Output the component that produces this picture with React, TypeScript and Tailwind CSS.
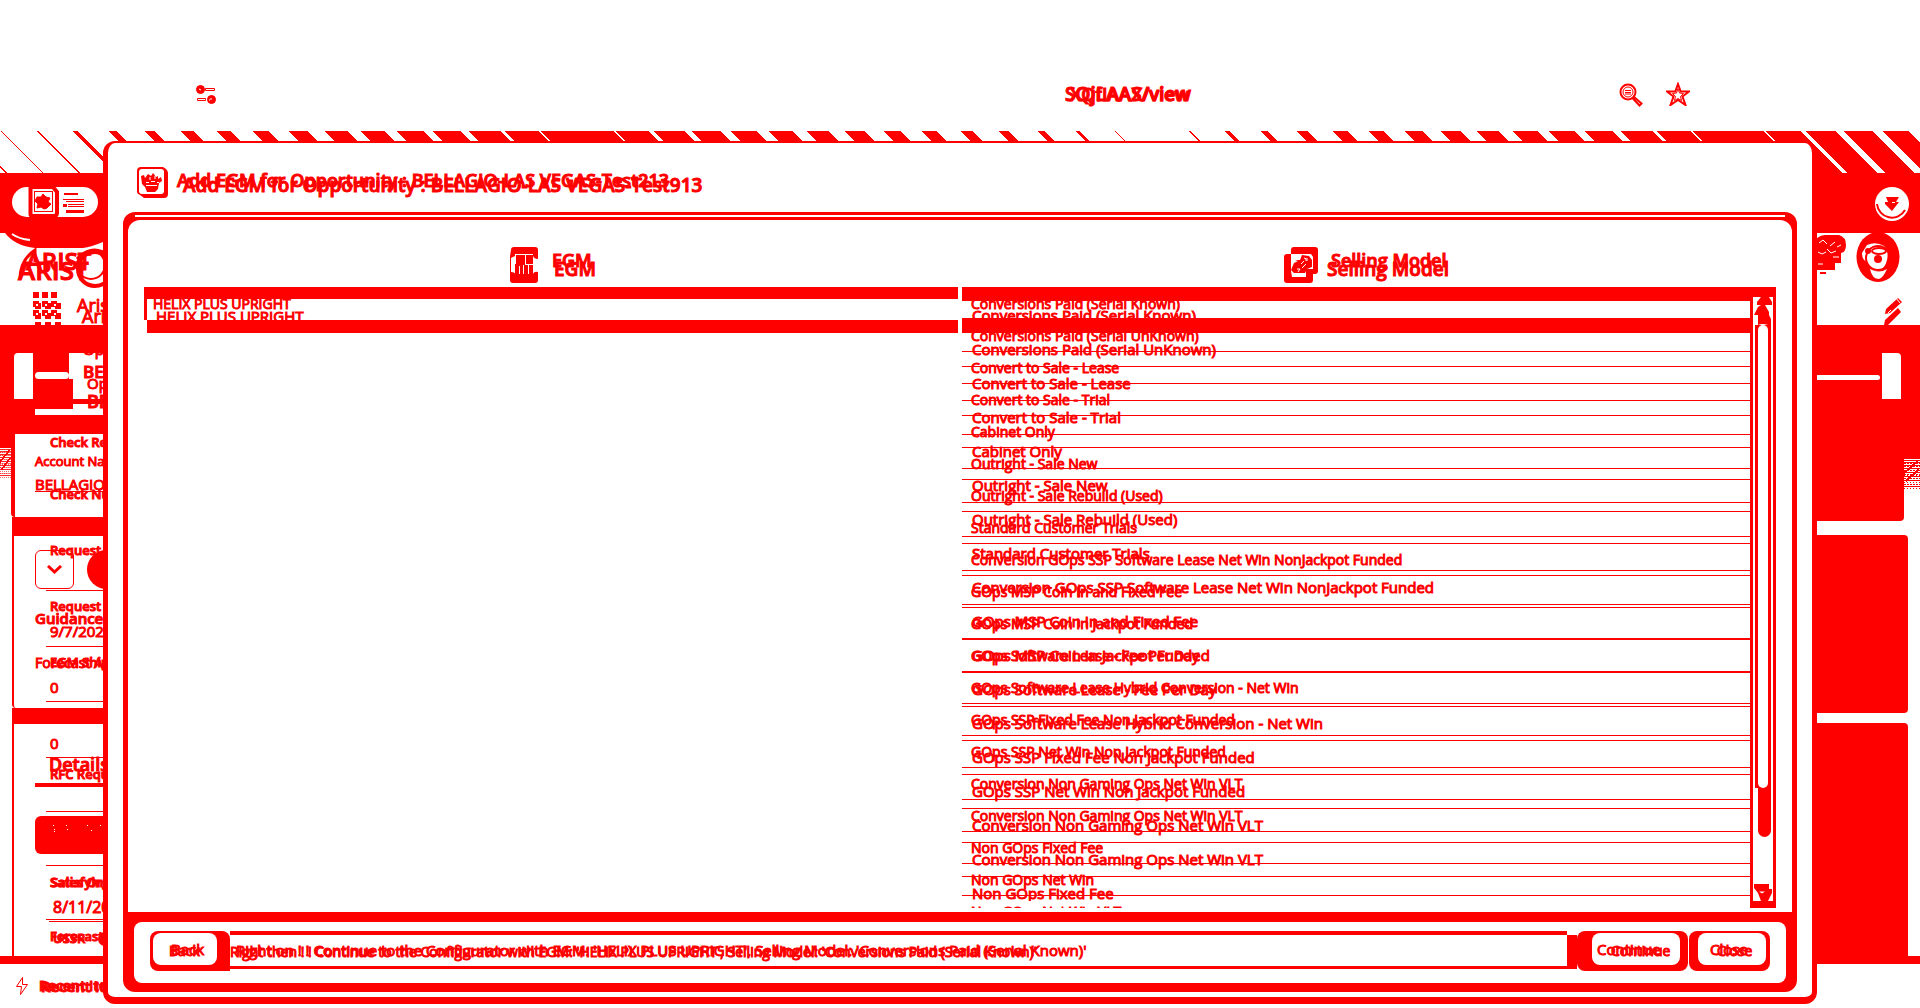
import React from "react";

const rows = [
  "Conversions Paid (Serial Known)",
  "Conversions Paid (Serial UnKnown)",
  "Convert to Sale - Lease",
  "Convert to Sale - Trial",
  "Cabinet Only",
  "Outright - Sale New",
  "Outright - Sale Rebuild (Used)",
  "Standard Customer Trials",
  "Conversion GOps SSP Software Lease Net Win NonJackpot Funded",
  "GOps MSP Coin In and Fixed Fee",
  "GOps MSP Coin In Jackpot Funded",
  "GOps Software Lease - Fee Per Day",
  "GOps Software Lease Hybrid Conversion - Net Win",
  "GOps SSP Fixed Fee Non Jackpot Funded",
  "GOps SSP Net Win Non Jackpot Funded",
  "Conversion Non Gaming Ops Net Win VLT",
  "Conversion Non Gaming Ops Net Win VLT",
  "Non GOps Fixed Fee",
  "Non GOps Net Win",
  "Non GOps Net Win VLT",
];

const stripes: [number, number][] = [
  [-37, -35], [0, 1], [36, 38], [72, 77], [108, 116], [144, 154], [180, 193], [216, 230], [252, 268], [288, 307],
  [324, 347], [360, 384], [396, 423], [432, 460], [468, 500], [504, 538], [540, 613], [615, 648], [653, 684],
  [691, 720], [730, 756], [768, 792], [806, 828], [844, 864], [883, 900], [921, 936], [960, 972], [998, 1008],
  [1037, 1044], [1075, 1079], [1114, 1115], [1188, 1190], [1224, 1229], [1260, 1267], [1296, 1307], [1332, 1347],
  [1368, 1383], [1404, 1422], [1440, 1460], [1476, 1498], [1512, 1537], [1548, 1574], [1584, 1612], [1620, 1652],
  [1656, 1690], [1692, 1763], [1765, 1800], [1805, 1835], [1843, 1872], [1882, 1908], [1919, 1946],
];

function Stripes() {
  return (
    <svg className="block h-[42px] w-full shrink-0" viewBox="0 0 1920 42" preserveAspectRatio="none" fill="#f00" shapeRendering="crispEdges">
      {stripes.map(([a, b]) => (
        <path key={a} d={`M${a} 0H${b}L${b + 42} 42H${a + 42}Z`} />
      ))}
    </svg>
  );
}

function AddressBar() {
  return (
    <header className="flex h-[131px] shrink-0 items-start pt-[82px]">
      <svg className="ml-[196px] mt-[2px] h-[21px] w-[21px]" viewBox="0 0 21 21" fill="none" stroke="#f00">
        <circle cx="4.500" cy="5.500" r="4" fill="#f00" />
        <circle cx="15.500" cy="15.500" r="4" fill="#f00" />
        <path d="M9.500 4.500h9v2h-9zM1.500 14.500h8v2h-8z" />
        <path d="M3 5l2 1M15 14v2M13 16h1" stroke="#fff" />
      </svg>
      <div className="relative ml-[848px] h-6 flex-1 text-[18px] leading-6 font-semibold">
        <span className="absolute left-[5px] top-0">XQfIAAX/view</span>
        <span className="absolute left-0 top-0 text-[19px]">SQjLAAS/view</span>
      </div>
      <svg className="mt-[1px] h-6 w-6" viewBox="0 0 24 24" fill="none" stroke="#f00">
        <circle cx="9" cy="9" r="7.500" strokeWidth="2" />
        <circle cx="9" cy="9" r="5" />
        <path d="M6 7.500h6M6 9.500h6M6 11h6" />
        <path d="M13.500 15l7 7.500 2-2-8-7" strokeWidth="2" />
      </svg>
      <svg className="ml-[23px] mr-[230px] h-6 w-6" viewBox="0 0 24 24" fill="none" stroke="#f00" strokeWidth="2">
        <path d="M12 2l2.700 7.500H23l-6.500 5 3 8.500-7.500-5-7.500 5 3-8.500L1 9.500h8.300z" />
        <path d="M12 6.500l1.500 4.500 4 .5-3 3 1 4-3.500-2-3.500 2 1-4-3-3 4-.5z" strokeWidth="1" />
      </svg>
    </header>
  );
}

function NavBand() {
  return (
    <div className="flex h-[60px] shrink-0 items-start justify-between bg-[#ff0000] pt-[14px]">
      <div className="ml-3 flex h-[30px] w-[86px] rounded-full bg-white pl-4">
        <svg className="h-[30px] w-[31px]" viewBox="0 0 31 30" fill="none" stroke="#f00">
          <path d="M2.500 0v27q0 2 2 2H26q3 0 3-3V5l-4-5z" strokeWidth="4" />
          <rect x="6.500" y="4.500" width="18" height="20" />
          <path d="M9 10l4 0 2-3 3 3 4 1-2 4 3 2-4 4-3 1-3-2-4 1 1-4-3-3z" fill="#f00" />
        </svg>
        <svg className="ml-1 h-[30px] w-[21px]" viewBox="0 0 21 30" fill="#f00" shapeRendering="crispEdges">
          <path d="M1 6h14v2H1zM0 12h21v1H0zM3 14h18v1H3zM0 17h4v3H0zM5 17h16v1H5zM5 19h16v1H5zM3 23h18v3H3z" />
        </svg>
      </div>
      <svg className="mr-[10px] h-[34px] w-[36px]" viewBox="0 0 36 34">
        <circle cx="18" cy="17" r="17" fill="#fff" />
        <path d="M3 17a15 15 0 0 0 28 6" fill="none" stroke="#f00" strokeWidth="2" />
        <path d="M12 10h13l-3 5h3l-7 9-7-7v-2h3z" fill="#f00" />
        <path d="M18 15.500h3" stroke="#fff" />
      </svg>
    </div>
  );
}

function AppHeader() {
  return (
    <div className="flex h-[92px] shrink-0 justify-between bg-white">
      <div className="relative w-[103px] overflow-hidden">
        <svg className="h-[58px] w-[103px]" viewBox="0 0 103 58" fill="none" stroke="#f00">
          <path d="M5 0h98v9q-12 5-20 6H35Q15 13 5 0z" fill="#f00" stroke="none" />
          <path d="M12 1q7 5 18 6" stroke="#fff" strokeWidth="2" />
          <circle cx="95" cy="36" r="17" strokeWidth="4" />
          <circle cx="91" cy="32" r="14" strokeWidth="2" />
          <path d="M77 26q14-15 30-5" strokeWidth="3" />
          <path d="M20 46q0-19 15-29v12" strokeWidth="3" />
        </svg>
        <span className="absolute left-[18px] top-[22px] text-[26px] leading-[30px] font-semibold">ARIST</span>
        <span className="absolute left-[26px] top-[15px] text-[24px] leading-[26px] font-semibold">ARIST</span>
        <div className="flex">
          <svg className="ml-[33px] mt-[1px] h-[33px] w-[28px] shrink-0" viewBox="0 0 28 33" fill="#f00" shapeRendering="crispEdges">
            {[0, 9, 18].map((x) =>
              [0, 9, 18].map((y) => <rect key={`${x}-${y}`} x={x} y={y} width="6" height="6" />)
            )}
            {[2, 12, 22].map((x) =>
              [11, 21, 30].map((y) => <rect key={`${x}-${y}`} x={x} y={y} width="6" height="6" />)
            )}
            <path d="M3 12h2v2H3zM12 12h2v2h-2zM21 12h2v2h-2zM3 21h2v2H3zM12 21h2v2h-2zM21 21h2v2h-2z" fill="#fff" />
          </svg>
          <span className="ml-4 mt-1 text-[18px] leading-5">Aristocrat</span>
        </div>
        <span className="absolute left-[82px] top-[73px] text-[18px] leading-5">Aristocrat</span>
      </div>
      <svg className="h-[92px] w-[103px]" viewBox="0 0 103 92" fill="#f00">
        <path d="M0 5q4-3 8-3h14q7 2 7 10 0 7-5 8v10l-6 0v7H8H0z" />
        <path d="M2 10l4-3 4 4M13 13l5-4M20 14l4-2M1 19l4 2 4-2M10 16l4 4 5-2M16 24h6M1 31h5" stroke="#fff" strokeWidth="1" fill="none" />
        <path d="M3 39h6v2H3z" />
        <ellipse cx="61" cy="24" rx="21.500" ry="25" />
        <path d="M50 12q9-4 17 1 5 5 3 14-2 9-9 11-8 0-11-9-5-2-5-9z" fill="#fff" />
        <circle cx="61" cy="25" r="12" fill="none" stroke="#f00" strokeWidth="2" />
        <ellipse cx="62" cy="18" rx="7" ry="3" fill="none" stroke="#f00" strokeWidth="2" />
        <circle cx="61" cy="26" r="4" />
        <circle cx="51" cy="18" r="3" />
        <path d="M53 36q9 5 17 0-4 9-8 10-7 0-9-10z" fill="#fff" />
        <path d="M69 76l12-11 4 4-12 11-5 1zM67 92l1-5 13-12 3 4-13 13z" />
        <path d="M71 80l3-3M79 65l4 5" stroke="#fff" />
      </svg>
    </div>
  );
}

function Hatch() {
  return (
    <svg className="block h-[44px] w-full" viewBox="0 0 16 44" preserveAspectRatio="none" fill="none" stroke="#f00" strokeWidth="1" shapeRendering="crispEdges">
      <path d="M0 0h16v14H0z" fill="#f00" stroke="none" />
      <path d="M0 15.500h16M0 17.500h16M0 20.500h16M0 23.500h16M0 27.500h16M0 31.500h16M0 35.500h16M0 41.500h16" />
      <path d="M0 18.500h16M0 21.500h16M0 25.500h16M0 29.500h16M0 33.500h16M0 39.500h16" strokeDasharray="2 1" />
      <path d="M0 30.500h16M0 37.500h16M0 43.500h16" strokeDasharray="1 2" />
      <path d="M0 28l14-12M2 36l13-12" strokeWidth="2" />
    </svg>
  );
}

const label = "h-4 shrink-0 whitespace-nowrap text-[13px] leading-4 font-semibold";

function LeftRail() {
  return (
    <div className="relative flex w-[103px] flex-col overflow-hidden">
      <div className="flex h-[109px] shrink-0 bg-[#ff0000] pl-[14px] pt-7">
        <div className="h-[46px] w-[19px] shrink-0 rounded-tl-sm bg-white" />
        <div className="h-[62px] w-10 shrink-0">
          <div className="mt-[19px] ml-[2px] h-[7px] w-[34px] rounded-sm bg-white" />
          <div className="mt-[30px] ml-[2px] h-[6px] bg-white" />
        </div>
        <div className="relative -ml-1 h-[62px] w-[38px] shrink-0 overflow-hidden bg-white pl-[14px] text-[15px]">
          <div className="absolute -left-0 top-[26px] h-[30px] w-1 bg-[#ff0000]" />
          <div className="-mt-3 leading-4">Opportunity</div>
          <div className="mt-[7px] text-[17px] leading-4 font-semibold">BELLAGIO</div>
          <div className="absolute left-[18px] top-[22px] leading-4">Opportunity</div>
          <div className="absolute left-[18px] top-[38px] text-lg leading-5 font-semibold">BELLAGIO</div>
          <div className="absolute inset-x-0 top-[46px] h-[5px] bg-[#ff0000]" />
        </div>
      </div>
      <div className="flex h-[83px] shrink-0 bg-white">
        <div className="w-[11px]">
          <Hatch />
        </div>
        <div className="flex-1 rounded-bl border-l-4 border-[#ff0000]" />
      </div>
      <div className="ml-3 h-[19px] shrink-0 bg-[#ff0000]" />
      <div className="ml-3 h-[172px] shrink-0 rounded-bl border-l-2 border-[#ff0000]" />
      <div className="ml-3 h-4 shrink-0 bg-[#ff0000]" />
      <div className="ml-3 flex-1 border-l-2 border-[#ff0000]" />

      <div className="absolute inset-x-0 top-[109px] flex flex-col pl-[50px]">
        <span className={label}>Check Requested</span>
        <span className={`${label} mt-9`}>Check Number</span>
        <span className={`${label} mt-10`}>Request Type</span>
        <hr className="-ml-1 mt-8 border-[#ff0000]" />
        <span className={`${label} mt-[7px]`}>Request Date</span>
        <span className="mt-[9px] text-[15px] leading-[17px]">9/7/2023</span>
        <hr className="-ml-1 mt-[6px] border-[#ff0000]" />
        <span className={`${label} mt-[7px]`}>EGM Shipped</span>
        <span className="mt-[9px] text-[15px] leading-[17px]">0</span>
        <hr className="-ml-1 mt-[5px] border-[#ff0000]" />
        <span className="mt-[33px] text-[15px] leading-[17px]">0</span>
        <hr className="-ml-1 mt-[5px] border-[#ff0000]" />
        <span className={`${label} mt-2`}>RFC Request</span>
        <hr className="-ml-1 mt-[29px] border-[#ff0000]" />
        <hr className="-ml-1 mt-[53px] border-[#ff0000]" />
        <span className={`${label} mt-2`}>Satisfying</span>
        <hr className="-ml-1 mt-[29px] border-[#ff0000]" />
        <span className={`${label} mt-2`}>Forecast</span>
      </div>

      <div className="absolute inset-x-0 top-[109px] flex flex-col pl-[35px]">
        <span className="mt-[19px] whitespace-nowrap text-[13px] leading-4">Account Name</span>
        <a href="#account" className="mt-[5px] text-[15px] leading-5 underline">BELLAGIO</a>
        <div className="mt-14 flex h-[39px] gap-[13px]">
          <button aria-label="Toggle guidance" className="flex w-[39px] shrink-0 items-center justify-center rounded-md border border-[#ff0000]">
            <svg className="h-[9px] w-[15px]" viewBox="0 0 15 9" fill="none" stroke="#f00" strokeWidth="3">
              <path d="M1 1l6.500 6L14 1" />
            </svg>
          </button>
          <div className="w-[39px] shrink-0 rounded-full bg-[#ff0000]" />
        </div>
        <span className="mt-5 text-[15px] leading-[18px] font-semibold">Guidance</span>
        <span className="mt-7 whitespace-nowrap text-sm leading-4">Forecast A</span>
        <span className="ml-[14px] mt-[82px] text-lg leading-[22px] font-semibold">Details</span>
        <div className="mt-2 h-1 bg-[#ff0000]" />
        <div className="mt-[29px] h-[38px] rounded-l-md bg-[#ff0000]">
          <svg className="ml-[18px] h-5 w-[50px]" viewBox="0 0 50 20" stroke="#fff" strokeDasharray="1 12 1 20">
            <path d="M0 9.500h48M1 13.500h34M1 15.500h4M38 14.500h18" />
          </svg>
        </div>
        <span className={`${label} ml-4 mt-5`}>Sales Org</span>
        <span className="ml-[18px] mt-2 text-base leading-[18px]">8/11/2023</span>
        <hr className="ml-[14px] mt-[5px] border-[#ff0000]" />
        <span className={`${label} ml-[18px] mt-2`}>USSR</span>
        <div className="absolute bottom-0 left-[98px] h-[14px] w-[14px] rounded-full bg-[#ff0000]" />
      </div>
    </div>
  );
}

function RightRail() {
  return (
    <div className="flex w-[103px] flex-col bg-white">
      <div className="flex h-7 shrink-0 bg-[#ff0000]" />
      <div className="flex h-[46px] shrink-0 justify-between bg-[#ff0000]">
        <div className="mt-[22px] h-[5px] w-[63px] rounded-r-full bg-white" />
        <div className="mr-[19px] w-[19px] rounded-tr bg-white" />
      </div>
      <div className="h-[46px] shrink-0 bg-[#ff0000]" />
      <div className="flex h-[76px] shrink-0">
        <div className="w-[87px] rounded-br bg-[#ff0000]" />
        <div className="flex-1">
          <Hatch />
        </div>
      </div>
      <div className="mr-3 mt-[14px] h-[178px] shrink-0 rounded-r bg-[#ff0000]" />
      <div className="mr-3 mt-[10px] flex-1 rounded-tr bg-[#ff0000]" />
    </div>
  );
}

function Backdrop() {
  return (
    <div className="flex min-h-screen flex-col">
      <AddressBar />
      <Stripes />
      <NavBand />
      <AppHeader />
      <div className="flex h-[631px] shrink-0 justify-between">
        <LeftRail />
        <RightRail />
      </div>
      <div className="h-2 shrink-0 bg-[#ff0000]" />
      <footer className="flex h-11 items-start pl-4 pt-[13px]">
        <svg className="h-[18px] w-3" viewBox="0 0 12 18" fill="none" stroke="#f00">
          <path d="M6.500.500L.500 9.500h5l-1 8 7-10h-5z" />
        </svg>
        <div className="relative ml-[11px] text-sm leading-[18px] font-semibold">
          <span>Recent Items</span>
          <span className="absolute left-[2px] top-0 whitespace-nowrap text-[15px]">Recent Items</span>
        </div>
      </footer>
    </div>
  );
}

function EgmIcon({ className }: { className: string }) {
  return (
    <svg className={className} viewBox="0 0 28 36" fill="none">
      <path d="M1 3q0-3 3-3h21q3 0 3 3v30q0 3-3 3H3q-3 0-3-3V9z" fill="#f00" />
      <path d="M1 11l4-2V7h18v2q1 3 5 3v13q-4-1-5 2H5q0-2-4-2z" fill="#fff" />
      <path d="M6 8h17v19H5V17h1z" fill="#f00" />
      <path d="M9.500 19v8M13.500 18v9M18.500 18v9M15.500 8v10M16 17.500h7" stroke="#fff" />
    </svg>
  );
}

function MoneyIcon() {
  return (
    <svg className="absolute left-1/2 top-[27px] ml-[-85px] h-[36px] w-[34px]" viewBox="0 0 34 36">
      <rect x="7" width="27" height="27" rx="3" fill="#f00" />
      <rect y="7" width="29" height="29" rx="3" fill="#f00" />
      <path d="M7 7h20l2 3v12h-7v8H8l-1-6z" fill="#fff" />
      <path d="M11 13l5 0 2-5 7 1 3 4v7l-5 2-2 4H10l-3-3 3-7 4-2z" fill="#f00" />
      <path d="M17 17l3-3M20 11q3 0 2 3M13 22h3l-2 3M22 17l-4 4M23 11v3" stroke="#fff" fill="none" />
    </svg>
  );
}

function ListBands({ rail }: { rail?: boolean }) {
  return rail ? (
    <>
      <div className="absolute left-0 top-0 h-[14px] w-full bg-[#ff0000]" />
      <div className="absolute left-0 top-[31px] h-[15px] w-full bg-[#ff0000]" />
    </>
  ) : (
    <>
      <div className="absolute left-0 top-0 h-[33px] w-full border-l-[3px] border-t-[12px] border-[#ff0000]" />
      <div className="absolute left-[3px] right-0 top-[33px] h-[13px] bg-[#ff0000]" />
    </>
  );
}

function Scrollbar() {
  return (
    <div className="flex h-full w-[26px] shrink-0 flex-col border-x-[3px] border-b-[7px] border-t-[10px] border-[#ff0000]">
      <svg className="h-[28px] w-5" viewBox="0 0 20 28" fill="#f00">
        <path d="M8 0h8l3 5v3h-7l4 7v3l2 4v6H5v-10H1l4-8 3-2H4V5z" />
        <path d="M5 28q4-2 10 0z" fill="#fff" />
      </svg>
      <div className="ml-[2px] h-[463px] w-4 bg-[#ff0000] px-[3px]">
        <div className="h-full rounded-full bg-white" />
      </div>
      <div className="ml-[5px] h-[49px] w-[13px] rounded-b-full bg-[#ff0000]" />
      <svg className="mt-auto h-[17px] w-5" viewBox="0 0 20 17" fill="#f00">
        <path d="M1 0h15v5h3v4l-4 8H8L5 9 1 4z" />
        <path d="M6 7.500h6l-3 2z" fill="#fff" />
      </svg>
    </div>
  );
}

function Panel() {
  return (
    <div className="mx-[5px] grid min-h-0 flex-1 grid-cols-2 gap-1 rounded-t-xl bg-white px-4 pb-1">
      <section className="flex min-h-0 flex-col">
        <h2 className="relative h-[67px] shrink-0 font-semibold">
          <EgmIcon className="absolute left-1/2 top-[27px] ml-[-41px] h-9 w-7" />
          <span className="absolute left-1/2 top-[28px] ml-px text-[18px] leading-6">EGM</span>
          <span className="absolute left-1/2 top-[37px] ml-[3px] text-[19px] leading-6">EGM</span>
        </h2>
        <div className="relative min-h-0 flex-1">
          <ListBands />
          <div className="absolute inset-x-0 top-[1px] pl-[9px] text-[14px] leading-8">HELIX PLUS UPRIGHT</div>
          <div className="absolute inset-x-0 top-[12px] h-[21px] overflow-hidden pl-[12px] text-[15px] leading-[34px]">HELIX PLUS UPRIGHT</div>
        </div>
      </section>
      <section className="flex min-h-0 flex-col">
        <h2 className="relative h-[67px] shrink-0 font-semibold">
          <MoneyIcon />
          <span className="absolute left-1/2 top-[28px] ml-[-38px] text-[18px] leading-6">Selling Model</span>
          <span className="absolute left-1/2 top-[37px] ml-[-42px] text-[19px] leading-6">Selling Model</span>
        </h2>
        <div className="flex min-h-0 flex-1">
          <div className="relative flex-1 overflow-hidden">
            <ListBands rail />
            <ul className="absolute inset-x-0 bottom-0 top-px overflow-hidden text-[14px] leading-[31px]">
              {rows.map((r, i) => (
                <li key={i} className="h-8 border-b border-[#ff0000] pl-[9px]">{r}</li>
              ))}
            </ul>
            <ul className="absolute inset-x-0 bottom-[7px] top-[12px] overflow-hidden text-[15px] leading-[33px]">
              {rows.map((r, i) => (
                <li key={i} className="h-[34px] border-b border-[#ff0000] pl-[10px]">{r}</li>
              ))}
            </ul>
          </div>
          <Scrollbar />
        </div>
      </section>
    </div>
  );
}

const target =
  "Continue to the Configurator with EGM: 'HELIX PLUS UPRIGHT', Selling Model: 'Conversions Paid (Serial Known)'";

function ActionBar() {
  return (
    <div className="mx-[11px] mb-[9px] mt-[10px] flex h-[61px] shrink-0 items-start rounded-lg bg-white px-4 pt-[9px] text-[14px]">
      <button className="h-10 w-[80px] shrink-0 rounded-l-lg rounded-tr-lg bg-[#ff0000] pl-[3px] pb-1">
        <span className="relative block h-8 w-16 rounded-lg bg-white leading-8">
          <span className="absolute left-[18px] top-0 text-[15px]">Back</span>
          <span className="absolute left-[16px] top-[2px]">Back</span>
        </span>
      </button>
      <div className="relative h-[38px] flex-1 overflow-hidden whitespace-nowrap border-b-[3px] border-t-4 border-[#ff0000] leading-[30px]">
        <span className="absolute left-0 top-[2px] text-[14px]">Right then ! ! {target}</span>
        <span className="absolute left-[6px] top-0 text-[15px]">Right on ! ! {target}</span>
      </div>
      <div className="mt-1 h-[34px] w-[10px] bg-[#ff0000]" />
      <button className="h-10 w-[111px] shrink-0 rounded-lg bg-[#ff0000] pl-[15px] pb-1">
        <span className="relative block h-8 w-[88px] rounded-lg bg-white leading-8">
          <span className="absolute left-[5px] top-0 text-[15px]">Continue</span>
          <span className="absolute left-[19px] top-[2px]">Continue</span>
        </span>
      </button>
      <button className="ml-px h-10 w-[81px] shrink-0 rounded-lg bg-[#ff0000] pl-[9px] pb-1">
        <span className="relative block h-8 w-[68px] rounded-lg bg-white leading-8">
          <span className="absolute left-[12px] top-0 text-[15px]">Close</span>
          <span className="absolute left-[19px] top-[2px]">Close</span>
        </span>
      </button>
    </div>
  );
}

function Dialog() {
  const title = "Add EGM for Opportunity : BELLAGIO-LAS VEGAS-Test";
  return (
    <div
      role="dialog"
      aria-label="Add EGM for Opportunity"
      className="absolute inset-x-[103px] bottom-1 top-[141px] flex flex-col rounded-xl border-x-[5px] border-b-[7px] border-t-2 border-[#ff0000] bg-white px-[15px] pb-[5px]"
    >
      <div className="flex h-[69px] shrink-0 items-start pl-[14px] pt-6">
        <svg className="h-[31px] w-[31px] shrink-0" viewBox="0 0 31 31">
          <path d="M4 0h22l3 2q2 2 2 4v21q0 4-4 4H7l-4-3Q0 27 0 25V4Q0 0 4 0z" fill="#f00" />
          <rect x="2" y="2" width="25" height="25" rx="3" fill="#fff" />
          <path d="M4 9l3-1 1 3 3-4 3 2 2-3 3 4 2-1v3l3-2 1 4-3 2-1 6-3 3h-8l-2-5-3-3z" fill="#f00" />
          <path d="M9 15.500h3M14 14.500h4M20 15.500h2M9 18.500h11M13 10v3M18 9v3" stroke="#fff" fill="none" />
        </svg>
        <h1 className="relative ml-[9px] flex-1 whitespace-nowrap font-semibold">
          <span className="absolute left-0 top-[1px] text-[18px] leading-6">{title}213</span>
          <span className="absolute left-[6px] top-[6px] text-[19px] leading-6">{title}913</span>
        </h1>
      </div>
      <div className="flex min-h-0 flex-1 flex-col rounded-xl bg-[#ff0000] pt-[3px]">
        <div className="mx-3 mb-[3px] h-[2px] shrink-0 bg-white" />
        <Panel />
        <ActionBar />
      </div>
    </div>
  );
}

export default function App() {
  return (
    <main className="relative min-h-screen overflow-hidden bg-white font-['Open_Sans','Noto_Sans',sans-serif] text-[#ff0000] [-webkit-text-stroke:1px_#ff0000]">
      <Backdrop />
      <Dialog />
    </main>
  );
}
